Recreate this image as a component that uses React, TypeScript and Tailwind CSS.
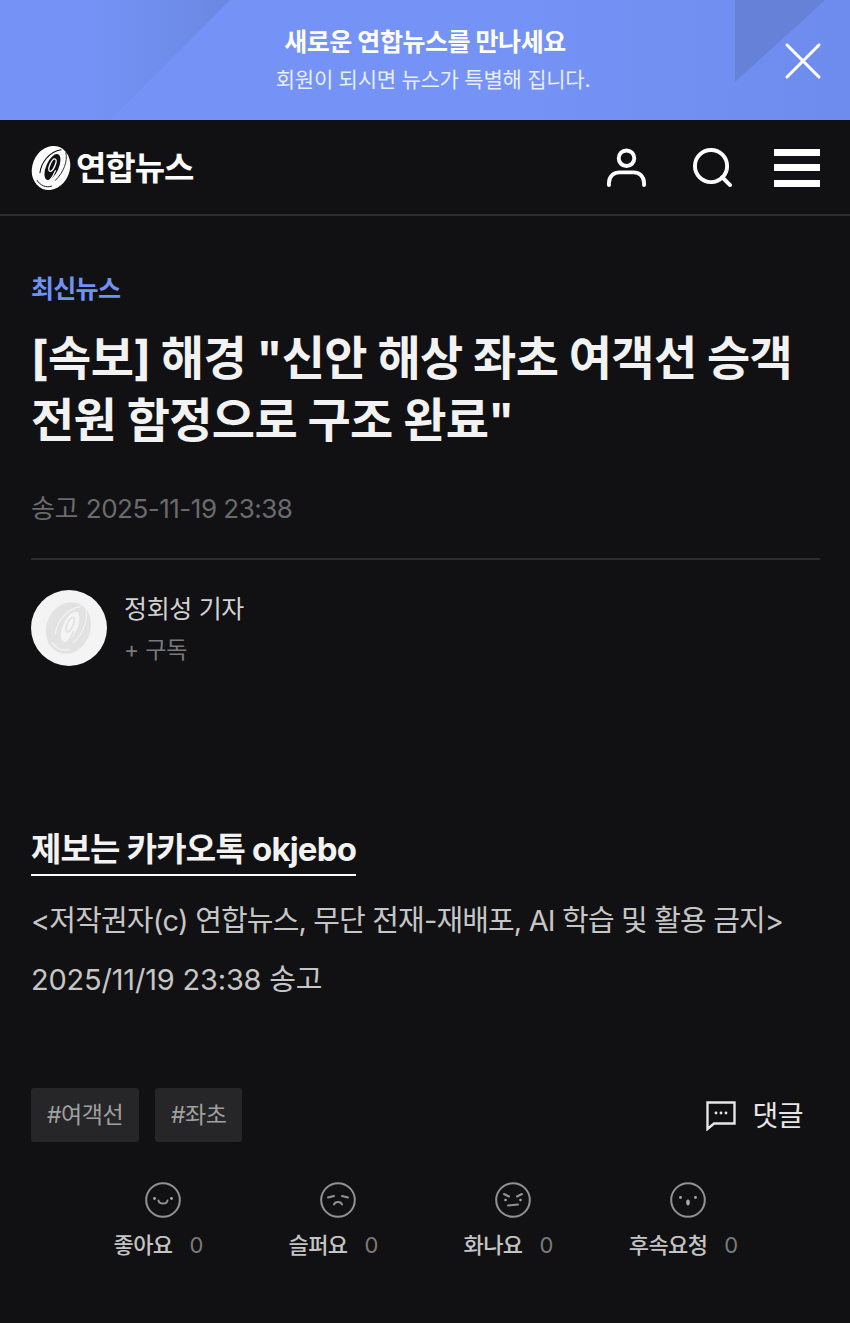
import { X } from 'lucide-react';

const fontStack = "font-['Inter','Noto_Sans_CJK_KR','Noto_Sans',sans-serif]";

function LogoMark({ className, color, cut }: { className: string; color: string; cut: string }) {
  return (
    <svg viewBox="0 0 44 48" className={className} fill="none" strokeLinecap="round">
      <ellipse cx="21.5" cy="24" rx="19.5" ry="23.5" transform="rotate(22 21.5 24)" fill={color} />
      <ellipse cx="23" cy="23" rx="6.5" ry="14.5" transform="rotate(24 23 23)" fill={cut} />
      <ellipse cx="23" cy="21" rx="2.6" ry="7" transform="rotate(24 23 21)" stroke={color} strokeWidth="1.4" />
      <path d="M26 27c-2 5-4 8-6 10" stroke={color} strokeWidth="1.4" />
      <path d="M10 29C11 18 20 7 32 5" stroke={cut} strokeWidth="1.1" />
      <path d="M37 8c2 9-2 20-11 29" stroke={cut} strokeWidth="0.9" />
      <path d="M7 37c3 5 9 8 15 6" stroke={cut} strokeWidth="1" />
    </svg>
  );
}

function Face({ kind }: { kind: 'like' | 'sad' | 'angry' | 'more' }) {
  return (
    <svg viewBox="0 0 36 36" className="h-9 w-9" fill="none" stroke="#929292" strokeWidth="2" strokeLinecap="round">
      <circle cx="18" cy="18" r="16.8" />
      {kind === 'like' && (
        <>
          <circle cx="9.5" cy="16.5" r="1.4" fill="#a8a8a8" stroke="none" />
          <circle cx="26.5" cy="16.5" r="1.4" fill="#a8a8a8" stroke="none" />
          <path d="M13.5 18.5c.5 4 8.5 4 9 0" />
        </>
      )}
      {kind === 'sad' && (
        <>
          <path d="M8 15.5l6-1.5M22 14l6 1.5" />
          <path d="M14 22.5c1-3.5 7-3.5 8 0" />
        </>
      )}
      {kind === 'angry' && (
        <>
          <path d="M9 12l5 2.5M27 12l-5 2.5" />
          <circle cx="10.5" cy="18" r="1.3" fill="#a8a8a8" stroke="none" />
          <circle cx="25.5" cy="18" r="1.3" fill="#a8a8a8" stroke="none" />
          <path d="M13 23.5l10-1" />
        </>
      )}
      {kind === 'more' && (
        <>
          <circle cx="10.5" cy="15.5" r="1.4" fill="#a8a8a8" stroke="none" />
          <circle cx="25.5" cy="15.5" r="1.4" fill="#a8a8a8" stroke="none" />
          <ellipse cx="18" cy="20.5" rx="1.8" ry="3" fill="#a8a8a8" stroke="none" />
        </>
      )}
    </svg>
  );
}

const reactions = [
  { kind: 'like' as const, label: '좋아요' },
  { kind: 'sad' as const, label: '슬퍼요' },
  { kind: 'angry' as const, label: '화나요' },
  { kind: 'more' as const, label: '후속요청' },
];

export default function App() {
  return (
    <div className={`${fontStack} h-[1323px] w-[850px] overflow-hidden bg-[#111113] text-white`}>
      {/* 상단 배너 */}
      <div className="relative flex h-[120px] flex-col items-center bg-linear-to-r from-[#7593f6] via-[#7593f6] via-60% to-[#6d8ced] pt-[23px]">
        <div className="absolute inset-0 bg-linear-to-r from-[#7593f6] from-[10%] to-[#6a88e2] to-[27%] [clip-path:polygon(0_0,230px_0,110px_120px,0_120px)]" />
        <div className="absolute inset-0 bg-[#6581d8] [clip-path:polygon(735px_0,825px_0,735px_82px)]" />
        <p className="relative text-[25px] leading-[38px] font-bold tracking-[-0.45px]">새로운 연합뉴스를 만나세요</p>
        <p className="relative ml-[16px] text-[21px] leading-[38px] tracking-[-0.25px] text-[#e8edfd]">회원이 되시면 뉴스가 특별해 집니다.</p>
        <X className="absolute top-[29px] right-[15px] h-[64px] w-[64px]" strokeWidth={1.15} />
      </div>

      {/* 헤더 */}
      <header className="flex h-[96px] items-center justify-between border-b-2 border-[#2d2d2f] pr-[30px] pl-[30px]">
        <div className="mt-[2px] flex items-center gap-[3px]">
          <LogoMark className="h-[46px] w-[43px]" color="#ffffff" cut="#111113" />
          <span className="text-[33px] leading-none font-bold tracking-[-1px]">연합뉴스</span>
        </div>
        <div className="mt-[1px] flex items-center">
          <svg viewBox="0 0 40 40" className="h-[39px] w-[39px]" fill="none" stroke="#fff" strokeWidth="4" strokeLinecap="round">
            <circle cx="20" cy="10.5" r="8" />
            <path d="M2 38v-2c0-7 5-11 11-11h14c6 0 11 4 11 11v2" />
          </svg>
          <svg viewBox="0 0 40 40" className="ml-[47px] h-[39px] w-[39px]" fill="none" stroke="#fff" strokeWidth="4" strokeLinecap="round">
            <circle cx="18.5" cy="18.5" r="16.5" />
            <path d="M30 30l8 8" />
          </svg>
          <div className="ml-[42px] flex h-[38px] w-[46px] flex-col justify-between">
            <div className="h-[7px] bg-white" />
            <div className="h-[7px] bg-white" />
            <div className="h-[7px] bg-white" />
          </div>
        </div>
      </header>

      <main className="pr-[30px] pl-[31px]">
        <p className="mt-[55px] text-[25px] leading-[36px] font-bold tracking-[-0.7px] text-[#7091f5]">최신뉴스</p>
        <h1 className="mt-[20px] text-[47px] leading-[62px] font-bold tracking-[-0.65px] text-[#f2f2f2]">
          [속보] 해경 "신안 해상 좌초 여객선 승객
          <br />
          전원 함정으로 구조 완료"
        </h1>
        <div className="mt-[38px] flex gap-[8px] text-[26px] leading-[40px] tracking-[-0.5px] text-[#6b6b6d]">
          <span>송고</span>
          <span>2025-11-19 23:38</span>
        </div>
        <div className="mt-[29px] h-[2px] bg-[#2d2d2f]" />

        <div className="mt-[30px] flex">
          <div className="flex h-[76px] w-[76px] items-center justify-center rounded-full bg-[#f4f4f4]">
            <LogoMark className="h-[54px] w-[50px]" color="#e2e2e2" cut="#f4f4f4" />
          </div>
          <div className="ml-[17px]">
            <p className="mt-[-1px] text-[25px] leading-[40px] tracking-[-0.35px] text-[#d2d2d2]">정회성 기자</p>
            <p className="mt-[1px] text-[23px] leading-[40px] tracking-[-0.2px] text-[#7a7a7c]">+ 구독</p>
          </div>
        </div>

        <div className="mt-[156px] inline-block border-b-2 border-white pb-[2px]">
          <p className="text-[33px] leading-[46px] font-bold tracking-[-0.8px] text-[#f2f2f2]">제보는 카카오톡 okjebo</p>
        </div>
        <p className="mt-[22px] text-[29px] leading-[46px] tracking-[-0.85px] text-[#c6c6c6]">
          &lt;저작권자(c) 연합뉴스, 무단 전재-재배포, AI 학습 및 활용 금지&gt;
        </p>
        <p className="mt-[13px] text-[29px] leading-[46px] tracking-[-0.2px] text-[#c6c6c6]">2025/11/19 23:38 송고</p>

        <div className="mt-[85px] flex items-center">
          <span className="flex h-[54px] items-center rounded-[3px] bg-[#262628] px-[16px] text-[23px] tracking-[-0.5px] text-[#a0a0a0]">#여객선</span>
          <span className="ml-[16px] flex h-[54px] items-center rounded-[3px] bg-[#262628] px-[16px] text-[23px] tracking-[-0.5px] text-[#a0a0a0]">#좌초</span>
          <div className="mt-[1px] mr-[17px] ml-auto flex items-center gap-[16px]">
            <svg viewBox="0 0 30 30" className="h-[30px] w-[30px]" fill="none" stroke="#e6e6e6" strokeWidth="2.4">
              <path d="M1.5 1.5h27v21H8L1.5 28z" strokeLinejoin="miter" />
              <circle cx="10" cy="12" r="1.4" fill="#e6e6e6" stroke="none" />
              <circle cx="15" cy="12" r="1.4" fill="#e6e6e6" stroke="none" />
              <circle cx="20" cy="12" r="1.4" fill="#e6e6e6" stroke="none" />
            </svg>
            <span className="text-[28px] leading-none tracking-[-0.5px] text-[#e6e6e6]">댓글</span>
          </div>
        </div>

        <div className="mt-[40px] ml-[44px] grid w-[700px] grid-cols-4">
          {reactions.map((r) => (
            <div key={r.kind} className="flex w-[175px] flex-col items-center">
              <Face kind={r.kind} />
              <div className="mt-[9px] mr-[8px] flex items-center gap-[17px] text-[22px] leading-[36px]">
                <span className="font-medium tracking-[-0.6px] text-[#c4c4c4]">{r.label}</span>
                <span className="text-[#7a7a7c]">0</span>
              </div>
            </div>
          ))}
        </div>
      </main>
    </div>
  );
}
